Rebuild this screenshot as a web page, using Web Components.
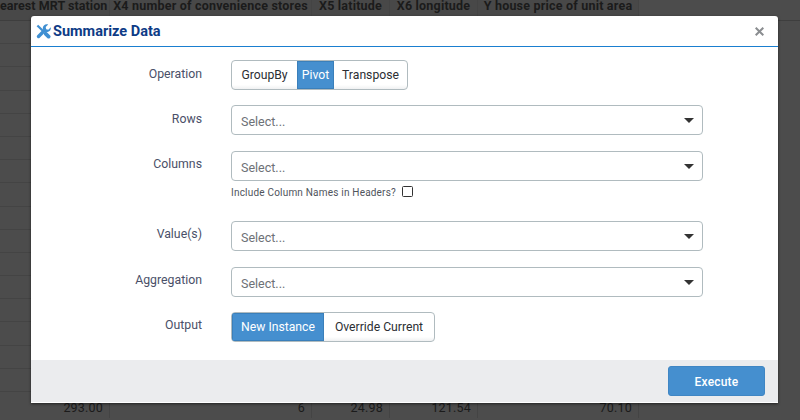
<!DOCTYPE html>
<html>
<head>
<meta charset="utf-8">
<style>
  html, body { margin: 0; height: 100%; overflow: hidden; background: #4c4c4c; }
  body { font-family: Roboto, "Noto Sans", sans-serif; }
</style>
</head>
<body>
<data-table></data-table>
<summarize-modal>
  <form-row label="Operation" after="15">
    <toggle-group options="GroupBy,Pivot,Transpose" widths="65,37,73" active="Pivot"></toggle-group>
  </form-row>
  <form-row label="Rows" after="16"><select-box></select-box></form-row>
  <form-row label="Columns" after="15" top="6">
    <select-box></select-box>
    <check-line>Include Column Names in Headers?</check-line>
  </form-row>
  <form-row label="Value(s)" after="16" top="6"><select-box></select-box></form-row>
  <form-row label="Aggregation" after="15" top="6"><select-box></select-box></form-row>
  <form-row label="Output" after="0" top="6">
    <toggle-group options="New Instance,Override Current" widths="92,110" active="New Instance"></toggle-group>
  </form-row>
</summarize-modal>

<script>
class DataTable extends HTMLElement {
  constructor() {
    super();
    this.attachShadow({ mode: "open" });
    const columns = [
      { w: 110, head: "earest MRT station", clip: true, val: "293.00" },
      { w: 202, head: "X4 number of convenience stores", val: "6" },
      { w: 78, head: "X5 latitude", val: "24.98" },
      { w: 88, head: "X6 longitude", val: "121.54" },
      { w: 161, head: "Y house price of unit area", val: "70.10" },
    ];
    const template = columns.map((c) => `${c.w}px`).join(" ");
    const head = columns
      .map((c) => `<div class="cell head ${c.clip ? "clip" : ""}">${c.head}</div>`)
      .join("");
    const rows = Array.from({ length: 16 }, () => `<div class="row"></div>`).join("");
    const last = columns.map((c) => `<div class="cell val">${c.val}</div>`).join("");
    this.shadowRoot.innerHTML = `
      <style>
        :host { display: block; height: 420px; overflow: hidden; color: #1b1b1b; font: 700 12.5px Roboto, sans-serif; letter-spacing: .2px; }
        .header { display: grid; grid-template-columns: ${template}; height: 20px; border-bottom: 1px solid #3e3e3e; }
        .cell { box-sizing: border-box; border-right: 1px solid #444; padding: 0 3px; white-space: nowrap; line-height: 11px; }
        .head { background: #484848; text-align: center; }
        .clip { text-align: right; padding: 0 3px 0 0; letter-spacing: .05px; }
        .rows { width: 639px; }
        .row { height: 22.2px; border-bottom: 1px solid #444; }
        .last { display: grid; grid-template-columns: ${template}; height: 26px; font-weight: 400; }
        .val { text-align: right; padding: 0 6px; line-height: 32px; height: 26px; }
      </style>
      <div class="header">${head}</div>
      <div class="rows">${rows}</div>
      <div class="last">${last}</div>`;
  }
}

class SummarizeModal extends HTMLElement {
  constructor() {
    super();
    this.attachShadow({ mode: "open" });
    this.shadowRoot.innerHTML = `
      <style>
        :host {
          position: absolute; left: 31px; top: 16px; width: 747px; height: 387px;
          display: flex; flex-direction: column; background: #fff; border-radius: 3px 3px 0 0;
          box-shadow: 0 1px 3px rgba(0,0,0,.55);
          color: #4a5068; font: 400 12.3px Roboto, sans-serif;
        }
        header { flex: none; height: 30px; display: flex; align-items: center; padding-left: 5px; border-bottom: 1.5px solid #1a7fd0; }
        h1 { margin: 0 0 0 2px; font: 700 14.5px Roboto, sans-serif; color: #0e3b86; }
        .close { margin-left: auto; margin-right: 14px; width: 9px; height: 9px; }
        main { flex: 1; padding-top: 13px; display: flex; flex-direction: column; }
        footer { flex: none; height: 42px; background: #ebecee; display: flex; justify-content: flex-end; align-items: center; padding-right: 13px; border-bottom: 1px solid #fff; }
        button {
          width: 97px; height: 30px; background: #458fcf; color: #fff; border: 1px solid #3f86c4; border-radius: 3px;
          padding: 2px 0 0; font: 500 12px Roboto, sans-serif; letter-spacing: .2px;
        }
      </style>
      <header>
        <svg width="15" height="15" viewBox="0 0 15 15" fill="#3f8fd2" stroke="#3f8fd2">
          <path d="M2.200 2.200L7 7" stroke-width="2.200" stroke-linecap="square"/>
          <path d="M9.800 9.800L12.600 12.600" stroke-width="3.800" stroke-linecap="round"/>
          <path d="M2.500 12.500L8.500 6.500" stroke-width="3.400" stroke-linecap="round"/>
          <path stroke="none" d="M14.800 3.200l-2.500 2.500-2.100-.5-.5-2.100L12.200.6C10.700 0 9 .4 7.900 1.500 6.800 2.600 6.500 4.200 7 5.600l2.400 2.400c1.400.5 3 .2 4.100-.9 1.100-1.100 1.600-2.600 1.300-3.900z"/>
        </svg>
        <h1>Summarize Data</h1>
        <svg class="close" viewBox="0 0 9 9" stroke="#8a8d90" stroke-width="2"><path d="M.7.7l7.600 7.600M8.300.7L.7 8.300"/></svg>
      </header>
      <main><slot></slot></main>
      <footer><button type="button">Execute</button></footer>`;
  }
}

class FormRow extends HTMLElement {
  static get observedAttributes() { return ["label", "after", "top"]; }
  constructor() {
    super();
    this.attachShadow({ mode: "open" });
    this.shadowRoot.innerHTML = `
      <style>
        :host { display: grid; grid-template-columns: 171px 472px; column-gap: 29px; }
        label { text-align: right; padding-top: 7px; line-height: 15px; }
        .field { display: flex; flex-direction: column; align-items: flex-start; }
      </style>
      <label></label>
      <div class="field"><slot></slot></div>`;
  }
  attributeChangedCallback(name, oldValue, value) {
    const label = this.shadowRoot.querySelector("label");
    if (name === "label") label.textContent = value;
    if (name === "top") label.style.paddingTop = `${value}px`;
    if (name === "after") this.style.marginBottom = `${value}px`;
  }
}

class ToggleGroup extends HTMLElement {
  constructor() {
    super();
    this.attachShadow({ mode: "open" });
    const active = this.getAttribute("active");
    const widths = this.getAttribute("widths").split(",");
    const items = this.getAttribute("options").split(",")
      .map((o, i) => `<span class="${o === active ? "on" : ""}" style="width:${widths[i]}px">${o}</span>`).join("");
    this.shadowRoot.innerHTML = `
      <style>
        :host { display: inline-flex; height: 30px; box-sizing: border-box; border: 1px solid #b0bbbf; border-radius: 4px; overflow: hidden; color: #2b2e33; font-size: 12.2px; background: linear-gradient(#fff 85%, #f0f1f2); }
        span { display: flex; align-items: center; justify-content: center; padding-bottom: 1px; box-sizing: border-box; }
        .on { background: #458fcf; color: #fff; box-shadow: inset 0 0 0 1px #3a7fba; }
      </style>
      ${items}`;
  }
}

class SelectBox extends HTMLElement {
  constructor() {
    super();
    this.attachShadow({ mode: "open" });
    this.shadowRoot.innerHTML = `
      <style>
        :host { display: flex; align-items: center; justify-content: space-between; width: 472px; height: 30px; box-sizing: border-box; border: 1px solid #b0bbbf; border-radius: 4px; padding: 2px 8px 0 9px; color: #6d7176; font-size: 12.5px; }
        i { width: 0; height: 0; border: 5px solid transparent; border-top: 5px solid #333; border-bottom: 0; margin-top: -2px; }
      </style>
      <span>Select...</span><i></i>`;
  }
}

class CheckLine extends HTMLElement {
  constructor() {
    super();
    this.attachShadow({ mode: "open" });
    this.shadowRoot.innerHTML = `
      <style>
        :host { display: flex; align-items: center; gap: 6px; font-size: 10px; color: #4f545c; letter-spacing: .2px; margin: 4px 0 7px 0; height: 14px; }
        i { width: 9px; height: 9px; border: 1.2px solid #333; border-radius: 1.5px; margin-top: -1px; }
      </style>
      <span><slot></slot></span><i></i>`;
  }
}

customElements.define("data-table", DataTable);
customElements.define("summarize-modal", SummarizeModal);
customElements.define("form-row", FormRow);
customElements.define("toggle-group", ToggleGroup);
customElements.define("select-box", SelectBox);
customElements.define("check-line", CheckLine);
</script>
</body>
</html>
